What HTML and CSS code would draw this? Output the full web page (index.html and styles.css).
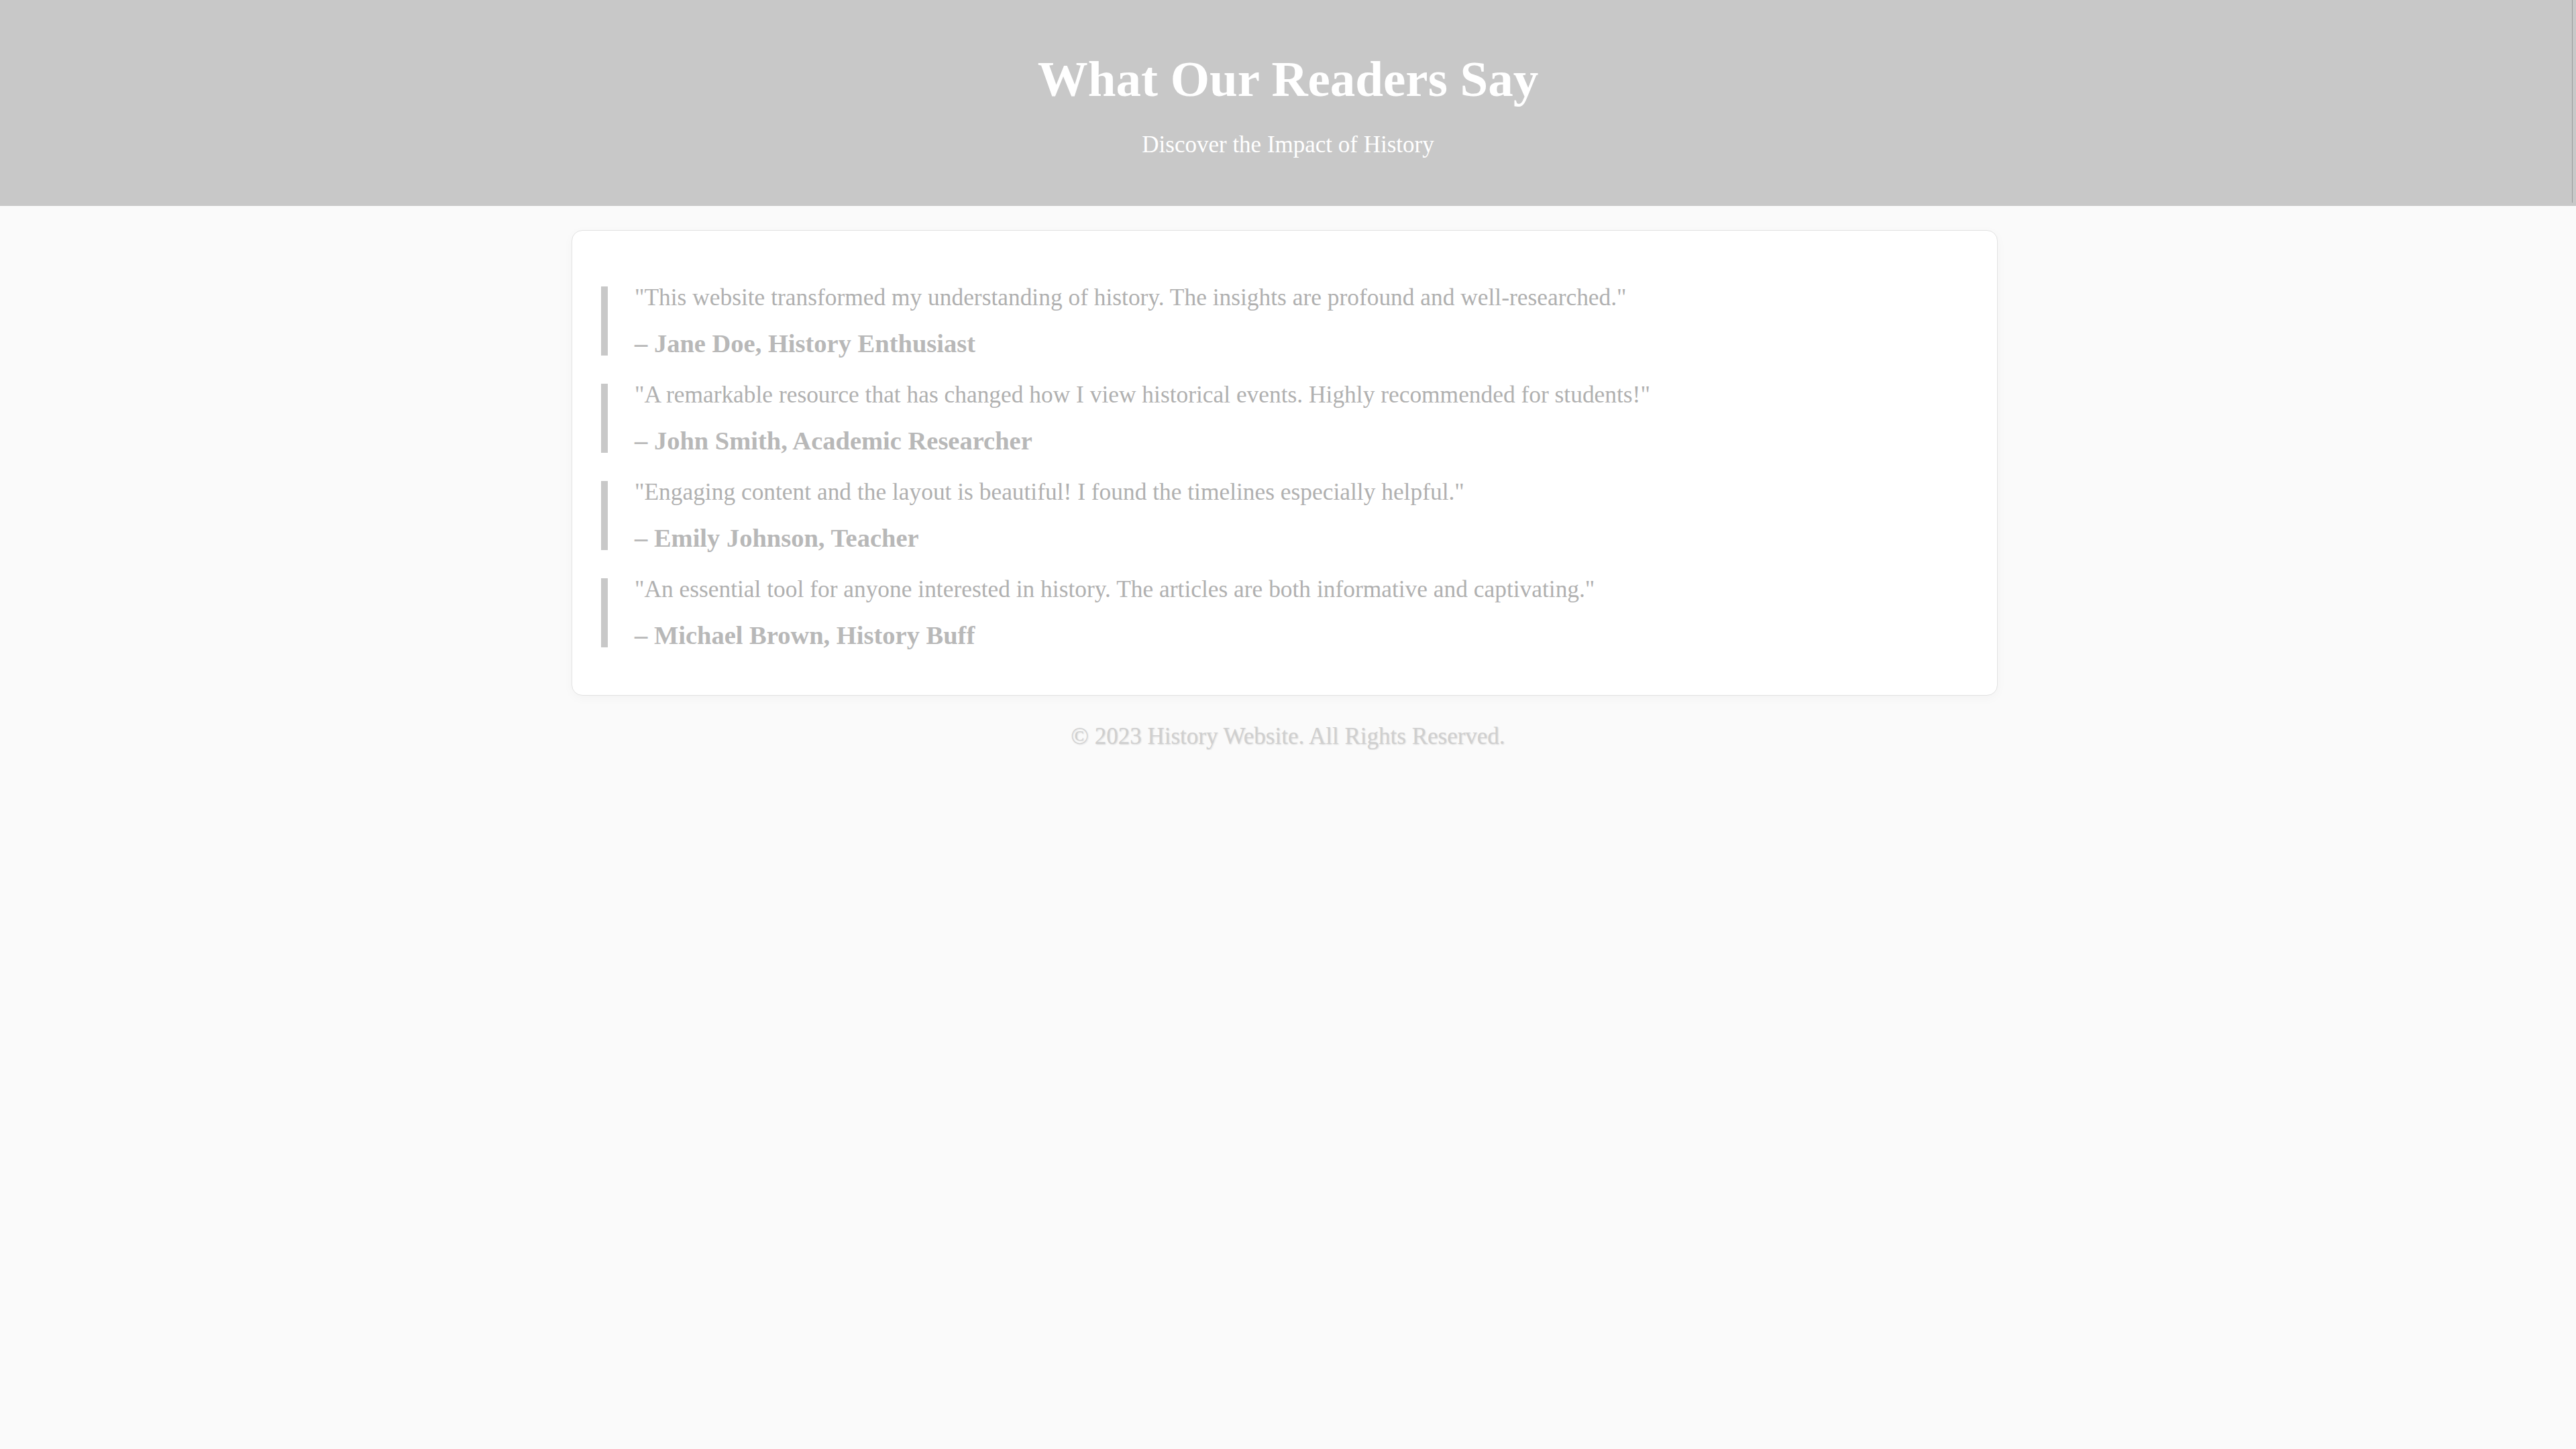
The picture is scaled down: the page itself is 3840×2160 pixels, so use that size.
FILE: index.html
```html
<!DOCTYPE html>
<html lang="en">
<head>
<meta charset="utf-8">
<title>What Our Readers Say</title>
<link rel="stylesheet" href="styles.css">
</head>
<body>
<header class="hero">
  <h1 class="hero-title">What Our Readers Say</h1>
  <p class="hero-sub">Discover the Impact of History</p>
</header>
<main class="main">
  <section class="card">
    <blockquote class="quote">
      <p class="quote-text">"This website transformed my understanding of history. The insights are profound and well-researched."</p>
      <p class="quote-author">– Jane Doe, History Enthusiast</p>
    </blockquote>
    <blockquote class="quote">
      <p class="quote-text">"A remarkable resource that has changed how I view historical events. Highly recommended for students!"</p>
      <p class="quote-author">– John Smith, Academic Researcher</p>
    </blockquote>
    <blockquote class="quote">
      <p class="quote-text">"Engaging content and the layout is beautiful! I found the timelines especially helpful."</p>
      <p class="quote-author">– Emily Johnson, Teacher</p>
    </blockquote>
    <blockquote class="quote">
      <p class="quote-text">"An essential tool for anyone interested in history. The articles are both informative and captivating."</p>
      <p class="quote-author">– Michael Brown, History Buff</p>
    </blockquote>
  </section>
</main>
<footer class="footer">
  <p class="footer-text">© 2023 History Website. All Rights Reserved.</p>
</footer>
</body>
</html>
```

FILE: styles.css
```css
* { box-sizing: border-box; }

html, body {
  margin: 0;
  padding: 0;
  background: #fafafa;
  font-family: Georgia, "Liberation Serif", "DejaVu Serif", serif;
}

.hero {
  position: relative;
  background: #c8c8c8;
  height: 307px;
  padding-top: 78px;
  text-align: center;
  color: #ffffff;
}

.hero::after {
  content: "";
  position: absolute;
  top: 0;
  right: 5px;
  width: 1px;
  height: 302px;
  background: #9a9a9a;
}

.hero-title {
  margin: 0;
  font-size: 75px;
  line-height: 80px;
  font-weight: bold;
}

.hero-sub {
  margin: 38px 0 0;
  font-size: 35px;
  line-height: 40px;
}

.main {
  display: flex;
  justify-content: center;
  padding: 36px 10px 0 0;
}

.card {
  width: 2126px;
  background: #ffffff;
  border: 1px solid #e2e2e2;
  border-radius: 16px;
  box-shadow: 0 4px 16px rgba(0, 0, 0, 0.03);
  padding: 83px 43px 71px;
  display: flex;
  flex-direction: column;
  gap: 42px;
}

.quote {
  margin: 0;
  border-left: 10px solid #c8c8c8;
  padding-left: 40px;
  height: 103px;
}

.quote-text {
  margin: 0;
  font-size: 35.4px;
  line-height: 33px;
  color: #b0b0b0;
}

.quote-author {
  margin: 35px 0 0;
  font-size: 38.5px;
  line-height: 35px;
  font-weight: bold;
  color: #b8b8b8;
}

.footer {
  padding: 41px 0 0;
  text-align: center;
}

.footer-text {
  margin: 0;
  font-size: 35px;
  line-height: 40px;
  color: #cfcfcf;
  text-shadow: 1px 1px 2px rgba(0, 0, 0, 0.12);
}
```
